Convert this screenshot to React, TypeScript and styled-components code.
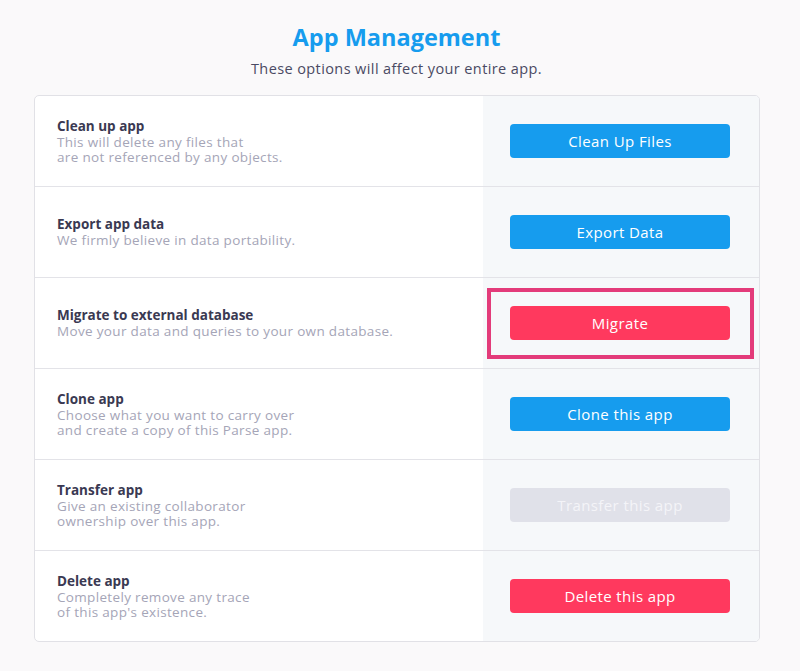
import styled, { createGlobalStyle } from 'styled-components';

const GlobalStyle = createGlobalStyle`
  html, body {
    margin: 0;
    padding: 0;
    background: #faf9fa;
    font-family: "Open Sans", Lato, "Liberation Sans", sans-serif;
  }
`;

type Variant = 'blue' | 'red' | 'disabled';

/** 옵션 목록 */
const options: { title: string; lines: string[]; action: string; variant: Variant; highlight?: boolean }[] = [
  { title: 'Clean up app', lines: ['This will delete any files that', 'are not referenced by any objects.'], action: 'Clean Up Files', variant: 'blue' },
  { title: 'Export app data', lines: ['We firmly believe in data portability.'], action: 'Export Data', variant: 'blue' },
  { title: 'Migrate to external database', lines: ['Move your data and queries to your own database.'], action: 'Migrate', variant: 'red', highlight: true },
  { title: 'Clone app', lines: ['Choose what you want to carry over', 'and create a copy of this Parse app.'], action: 'Clone this app', variant: 'blue' },
  { title: 'Transfer app', lines: ['Give an existing collaborator', 'ownership over this app.'], action: 'Transfer this app', variant: 'disabled' },
  { title: 'Delete app', lines: ['Completely remove any trace', "of this app's existence."], action: 'Delete this app', variant: 'red' },
];

export default function App() {
  return (
    <Page>
      <GlobalStyle />
      <Title>App Management</Title>
      <Subtitle>These options will affect your entire app.</Subtitle>

      <Card>
        {options.map((opt, index) => (
          <Row key={index} $last={index === options.length - 1}>
            <Info>
              <OptionTitle>{opt.title}</OptionTitle>
              <Description>
                {opt.lines.map((line, i) => (
                  <span key={i}>{line}</span>
                ))}
              </Description>
            </Info>
            <Action>
              <Button $variant={opt.variant} disabled={opt.variant === 'disabled'}>
                {opt.action}
              </Button>
              {opt.highlight && <Highlight />}
            </Action>
          </Row>
        ))}
      </Card>
    </Page>
  );
}

const Page = styled.main`
  display: flex;
  flex-direction: column;
  align-items: flex-start;
  padding: 22px 0 40px;
`;

const Title = styled.h1`
  align-self: center;
  margin: 0 7px 0 0;
  font-size: 23.5px;
  line-height: 30px;
  font-weight: 700;
  color: #169cee;
`;

const Subtitle = styled.p`
  align-self: center;
  margin: 7px 7px 0 0;
  font-size: 14.5px;
  line-height: 20px;
  letter-spacing: 0.4px;
  color: #4a4a63;
`;

const Card = styled.section`
  margin: 16px 0 0 34px;
  width: 724px;
  border: 1px solid #e1e1e6;
  border-radius: 5px;
  overflow: hidden;
  background: #fff;
`;

const Row = styled.div<{ $last: boolean }>`
  display: flex;
  height: 90px;
  border-bottom: ${({ $last }) => ($last ? 'none' : '1px solid #e3e3e8')};
`;

const Info = styled.div`
  flex: 1;
  display: flex;
  flex-direction: column;
  justify-content: center;
  padding-left: 22px;
`;

const OptionTitle = styled.div`
  font-size: 13.5px;
  line-height: 18px;
  font-weight: 700;
  color: #3a3952;
`;

const Description = styled.div`
  display: flex;
  flex-direction: column;
  font-size: 13.5px;
  line-height: 14.5px;
  letter-spacing: 0.33px;
  color: #a5a5b7;
  padding-bottom: 1px;
`;

const Action = styled.div`
  position: relative;
  width: 276px;
  display: flex;
  align-items: center;
  padding-left: 27px;
  box-sizing: border-box;
  background: #f6f8fa;
`;

const colors: Record<Variant, { bg: string; fg: string }> = {
  blue: { bg: '#169cee', fg: '#ffffff' },
  red: { bg: '#ff395e', fg: '#ffffff' },
  disabled: { bg: '#e0e1e9', fg: '#f4f4f8' },
};

const Button = styled.button<{ $variant: Variant }>`
  width: 220px;
  height: 34px;
  border: none;
  border-radius: 4px;
  font-family: inherit;
  font-size: 15px;
  letter-spacing: 0.4px;
  background: ${({ $variant }) => colors[$variant].bg};
  color: ${({ $variant }) => colors[$variant].fg};
  cursor: ${({ $variant }) => ($variant === 'disabled' ? 'default' : 'pointer')};
`;

const Highlight = styled.div`
  position: absolute;
  left: 4px;
  top: 10px;
  width: 267px;
  height: 71px;
  border: 4px solid #e33b7a;
  box-sizing: border-box;
  pointer-events: none;
`;
